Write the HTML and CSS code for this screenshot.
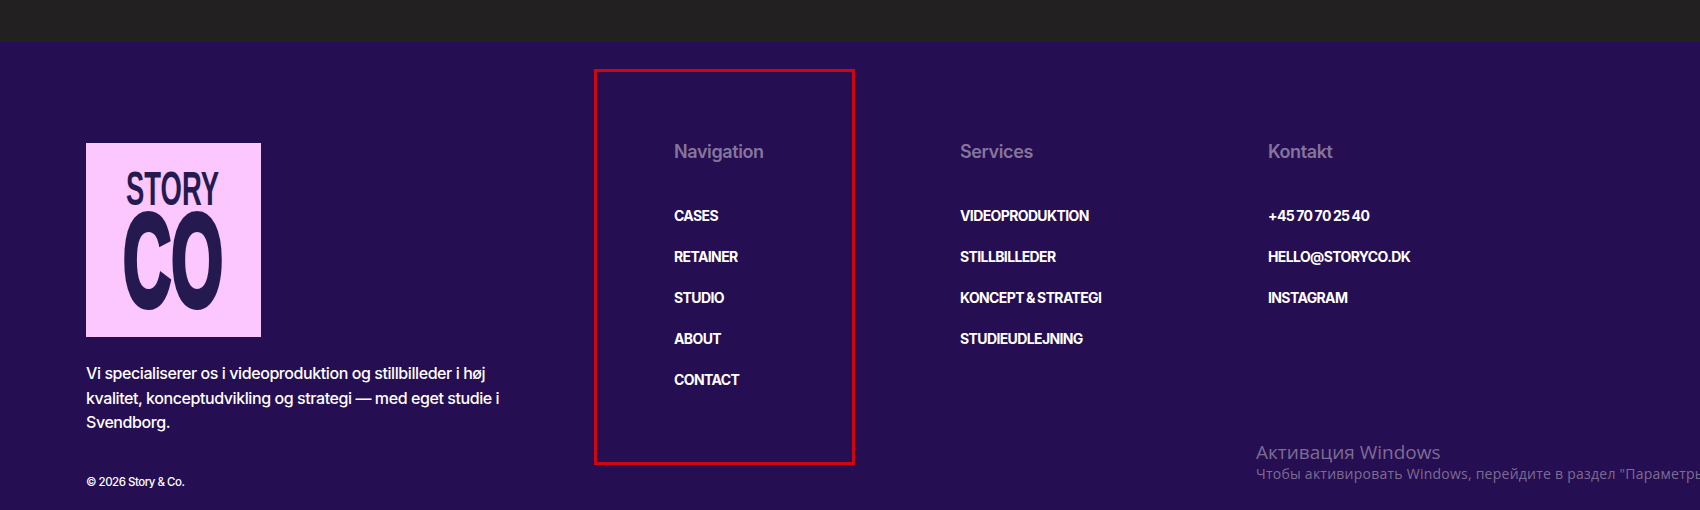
FILE: index.html
```html
<!DOCTYPE html>
<html lang="da">
<head>
    <meta charset="UTF-8">
    <meta name="viewport" content="width=device-width, initial-scale=1.0">
    <title>Story & Co.</title>
    <link rel="stylesheet" href="styles.css">
</head>
<body>
<div class="top-bar"></div>

<footer class="footer">
    <!-- Logo and intro -->
    <div class="brand">
        <svg class="logo" viewBox="0 0 175 194" role="img" aria-label="Story Co">
            <rect width="175" height="194" fill="#fcc6ff"/>
            <text class="logo-story" x="40" y="62" textLength="93" lengthAdjust="spacingAndGlyphs">STORY</text>
            <text class="logo-co" x="37" y="163" textLength="100" lengthAdjust="spacingAndGlyphs">CO</text>
        </svg>
        <p class="intro">Vi specialiserer os i videoproduktion og stillbilleder i høj kvalitet, konceptudvikling og strategi — med eget studie i Svendborg.</p>
        <p class="copyright">© 2026 Story &amp; Co.</p>
    </div>

    <!-- Navigation -->
    <div class="column column-marked">
        <h4>Navigation</h4>
        <ul>
            <li><a href="#">Cases</a></li>
            <li><a href="#">Retainer</a></li>
            <li><a href="#">Studio</a></li>
            <li><a href="#">About</a></li>
            <li><a href="#">Contact</a></li>
        </ul>
    </div>

    <!-- Services -->
    <div class="column">
        <h4>Services</h4>
        <ul>
            <li><a href="#">Videoproduktion</a></li>
            <li><a href="#">Stillbilleder</a></li>
            <li><a href="#">Koncept &amp; strategi</a></li>
            <li><a href="#">Studieudlejning</a></li>
        </ul>
    </div>

    <!-- Contact -->
    <div class="column">
        <h4>Kontakt</h4>
        <ul>
            <li><a href="#">+45 70 70 25 40</a></li>
            <li><a href="#">hello@storyco.dk</a></li>
            <li><a href="#">Instagram</a></li>
        </ul>
    </div>
</footer>

<div class="watermark">
    <div class="watermark-title">Активация Windows</div>
    <div class="watermark-text">Чтобы активировать Windows, перейдите в раздел "Параметры".</div>
</div>
</body>
</html>
```

FILE: styles.css
```css
html, body {
    height: 100%;
}

body {
    margin: 0;
    overflow: hidden;
    font-family: Inter, "Liberation Sans", sans-serif;
    background-color: #260e52;
    color: #fff;
}

.top-bar {
    height: 42px;
    background-color: #232021;
}

.footer {
    display: grid;
    grid-template-columns: 508px 366px 308px 1fr;
    height: 468px;
    box-sizing: border-box;
    padding: 27px 0 0 86px;
}

.brand {
    padding-top: 74px;
}

.logo {
    display: block;
    width: 175px;
    height: 194px;
}

.logo-story,
.logo-co {
    font-family: "Liberation Sans", sans-serif;
    font-weight: 700;
    fill: #251a4f;
    stroke: #251a4f;
}

.logo-story {
    font-size: 49px;
    stroke-width: 0;
}

.logo-co {
    font-size: 132px;
    stroke-width: 6px;
}

.intro {
    width: 420px;
    margin: 24px 0 0;
    font-size: 16px;
    font-weight: 500;
    line-height: 24.5px;
    letter-spacing: -0.42px;
}

.copyright {
    margin: 40px 0 0;
    font-size: 11.5px;
    font-weight: 500;
    letter-spacing: -0.5px;
}

.column {
    padding-top: 72px;
}

.column-marked {
    box-sizing: border-box;
    width: 261px;
    height: 396px;
    padding: 69px 0 0 77px;
    border: 3px solid #cf0510;
}

.column h4 {
    margin: 0 0 43px;
    font-size: 18px;
    line-height: 22px;
    font-weight: 600;
    letter-spacing: -0.4px;
    color: #85759d;
}

.column ul {
    margin: 0;
    padding: 0;
    list-style: none;
}

.column li {
    height: 41px;
    font-size: 14px;
    line-height: 20px;
    letter-spacing: -0.62px;
    word-spacing: -0.5px;
}

.column a {
    color: #fff;
    font-weight: 700;
    text-decoration: none;
    text-transform: uppercase;
}

/* Windows activation notice sits over the page */
.watermark {
    position: absolute;
    left: 1256px;
    top: 438px;
    width: 444px;
    overflow: hidden;
    white-space: nowrap;
    font-family: "Open Sans", sans-serif;
    color: #7d6c92;
}

.watermark-title {
    font-size: 19px;
    line-height: 28px;
}

.watermark-text {
    margin-top: -2px;
    font-size: 14px;
    line-height: 20px;
    letter-spacing: 0.24px;
}
```
